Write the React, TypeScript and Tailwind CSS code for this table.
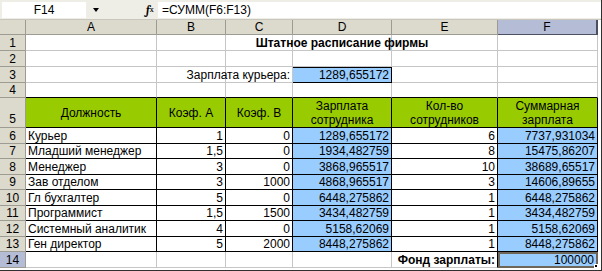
const cols = ["A", "B", "C", "D", "E", "F"];
const widths = ["w-[131px]", "w-[69px]", "w-[67px]", "w-[99px]", "w-[106px]", "w-[100px]"];

const data = [
   ["Курьер", "1", "0", "1289,655172", "6", "7737,931034"],
   ["Младший менеджер", "1,5", "0", "1934,482759", "8", "15475,86207"],
   ["Менеджер", "3", "0", "3868,965517", "10", "38689,65517"],
   ["Зав отделом", "3", "1000", "4868,965517", "3", "14606,89655"],
   ["Гл бухгалтер", "5", "0", "6448,275862", "1", "6448,275862"],
   ["Программист", "1,5", "1500", "3434,482759", "1", "3434,482759"],
   ["Системный аналитик", "4", "0", "5158,62069", "1", "5158,62069"],
   ["Ген директор", "5", "2000", "8448,275862", "1", "8448,275862"],
];
const dataHeights = ["h-[16px]", "h-[15px]", "h-[16px]", "h-[15px]", "h-[16px]", "h-[15px]", "h-[16px]", "h-[15px]"];

const RowHead = ({ n, h, active }: { n: number; h: string; active?: boolean }) => (
   <div
      className={`w-[26px] ${h} shrink-0 flex items-center justify-center border-r border-b border-[#9d9b92] ${
         active ? "bg-[#b4bcd6]" : "bg-[#dcd9cd]"
      }`}
   >
      {n}
   </div>
);

const Cell = ({
   i,
   children,
   className = "",
}: {
   i: number;
   children?: React.ReactNode;
   className?: string;
}) => (
   <div className={`${widths[i]} shrink-0 h-full flex items-center border-r border-b ${className}`}>
      {children}
   </div>
);

const App = () => {
   return (
      <div
         className="w-[602px] h-[271px] overflow-hidden bg-white text-[12px] text-black leading-none border-b border-r border-[#303030]"
         style={{ fontFamily: '"Liberation Sans", Arial, sans-serif' }}
      >
         {/* formula bar */}
         <div className="h-[20px] bg-[#eeede6] flex items-start pt-[2px] border-b border-[#c9c7bd]">
            <div className="ml-[2px] w-[84px] h-[16px] bg-white flex items-center justify-center text-[12px]">
               F14
            </div>
            <div className="w-[20px] h-[16px] flex items-center justify-center">
               <span className="border-x-[3px] border-x-transparent border-t-[4px] border-t-black"></span>
            </div>
            <div className="w-[40px]"></div>
            <div className="h-[16px] w-[12px] flex items-center italic font-bold text-[11px] font-serif">
               f<span className="text-[8px] not-italic font-normal">x</span>
            </div>
            <div className="flex-1 h-[16px] bg-white flex items-center pl-[4px]">=СУММ(F6:F13)</div>
         </div>

         {/* column headers */}
         <div className="flex h-[15px]">
            <div className="w-[26px] shrink-0 bg-[#dcd9cd] border-r border-b border-[#9d9b92]"></div>
            {cols.map((c, i) => (
               <div
                  key={c}
                  className={`${widths[i]} shrink-0 flex items-center justify-center border-r border-b ${
                     c === "F"
                        ? "bg-[#b4bcd6] border-[#4a5160] border-r-2"
                        : "bg-[#dcd9cd] border-[#9d9b92]"
                  }`}
               >
                  {c}
               </div>
            ))}
         </div>

         {/* row 1 */}
         <div className="flex h-[16px]">
            <RowHead n={1} h="h-[16px]" />
            {cols.map((c, i) => (
               <Cell key={c} i={i} className="border-[#c6c6c6] justify-center">
                  {c === "D" && <span className="whitespace-nowrap font-bold">Штатное расписание фирмы</span>}
               </Cell>
            ))}
         </div>

         {/* row 2 */}
         <div className="flex h-[16px]">
            <RowHead n={2} h="h-[16px]" />
            {cols.map((c, i) => (
               <Cell key={c} i={i} className="border-[#c6c6c6]" />
            ))}
         </div>

         {/* row 3 */}
         <div className="flex h-[16px]">
            <RowHead n={3} h="h-[16px]" />
            {cols.map((c, i) =>
               c === "C" ? (
                  <Cell key={c} i={i} className="border-[#c6c6c6] justify-end pr-[2px]">
                     <span className="whitespace-nowrap">Зарплата курьера:</span>
                  </Cell>
               ) : c === "D" ? (
                  <Cell key={c} i={i} className="bg-[#99ccff] border-black border-t justify-end pr-[2px]">
                     1289,655172
                  </Cell>
               ) : (
                  <Cell key={c} i={i} className="border-[#c6c6c6]" />
               )
            )}
         </div>

         {/* row 4 */}
         <div className="flex h-[15px]">
            <RowHead n={4} h="h-[15px]" />
            {cols.map((c, i) => (
               <Cell key={c} i={i} className="border-r-[#c6c6c6] border-b-black" />
            ))}
         </div>

         {/* row 5 header */}
         <div className="flex h-[30px]">
            <div className="w-[26px] h-[30px] shrink-0 flex items-end justify-center pb-[2px] border-r border-b border-[#9d9b92] bg-[#dcd9cd]">
               5
            </div>
            {["Должность", "Коэф. А", "Коэф. В", "Зарплата сотрудника", "Кол-во сотрудников", "Суммарная зарплата"].map(
               (t, i) => (
                  <Cell key={t} i={i} className="bg-[#99cc00] border-black justify-center text-center leading-[14px] px-[2px]">
                     <span className={i > 2 ? "w-[80px]" : ""}>{t}</span>
                  </Cell>
               )
            )}
         </div>

         {/* data rows */}
         {data.map((r, ri) => (
            <div key={ri} className={`flex ${dataHeights[ri]}`}>
               <RowHead n={ri + 6} h={dataHeights[ri]} />
               {r.map((v, i) => (
                  <Cell
                     key={i}
                     i={i}
                     className={`border-black whitespace-nowrap ${
                        i === 0 ? "pl-[2px]" : "justify-end pr-[2px]"
                     } ${i === 3 || i === 5 ? "bg-[#99ccff]" : ""}`}
                  >
                     {v}
                  </Cell>
               ))}
            </div>
         ))}

         {/* row 14 */}
         <div className="flex h-[16px]">
            <RowHead n={14} h="h-[16px]" active />
            {cols.map((c, i) =>
               c === "E" ? (
                  <Cell key={c} i={i} className="border-r-black border-b-[#c6c6c6] justify-end pr-[2px] font-bold">
                     <span className="whitespace-nowrap">Фонд зарплаты:</span>
                  </Cell>
               ) : c === "F" ? (
                  <div key={c} className="relative w-[100px] shrink-0 h-full bg-[#99ccff] border-2 border-[#6e6658] flex items-center justify-end pr-[2px]">
                     100000
                     <span className="absolute -right-[2px] -bottom-[2px] w-[4px] h-[4px] bg-black border border-white"></span>
                  </div>
               ) : (
                  <Cell key={c} i={i} className="border-[#c6c6c6]" />
               )
            )}
         </div>
      </div>
   );
};

export default App;
